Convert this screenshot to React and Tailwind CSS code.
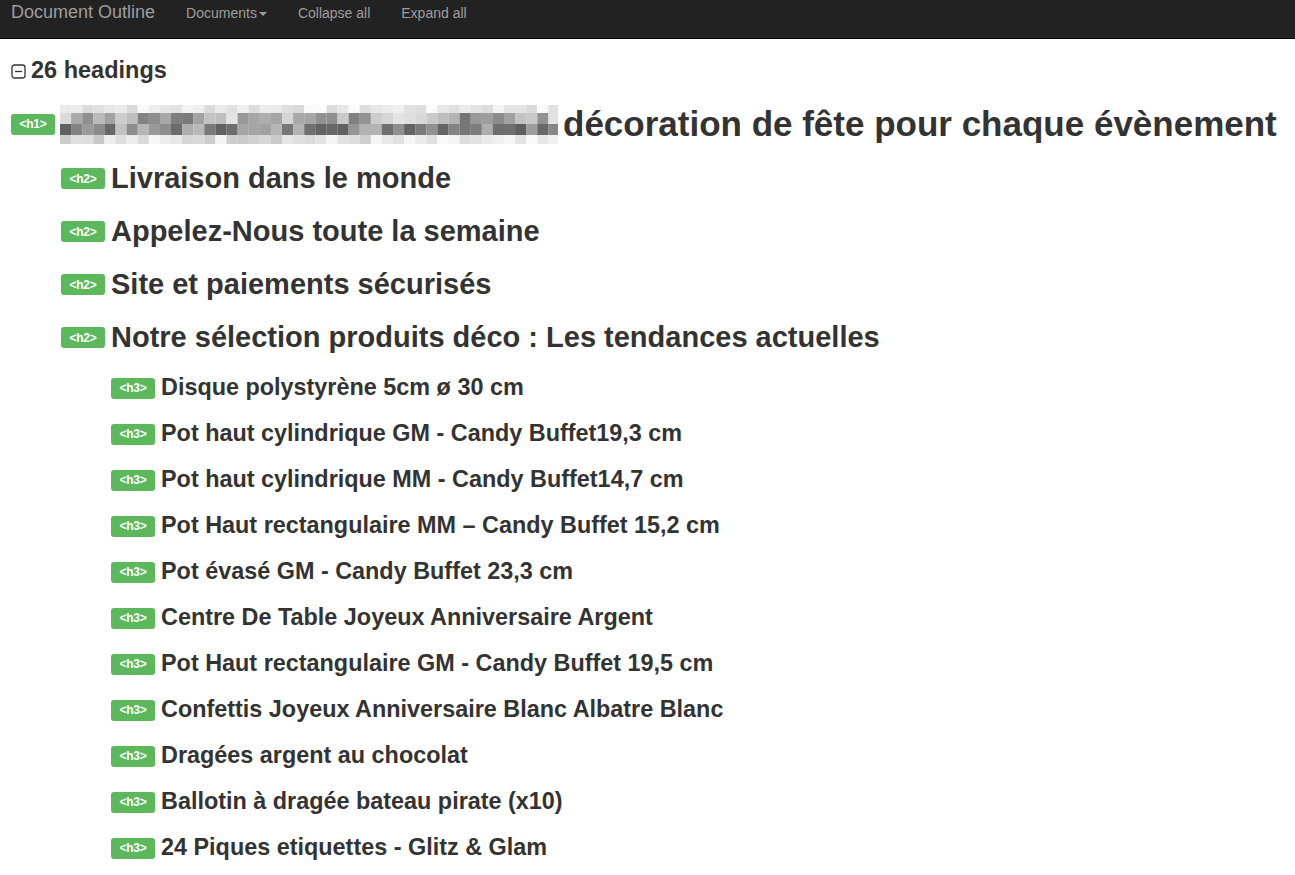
import { useMemo } from "react";

const H2 = [
  "Livraison dans le monde",
  "Appelez-Nous toute la semaine",
  "Site et paiements sécurisés",
  "Notre sélection produits déco : Les tendances actuelles",
];

const H3 = [
  "Disque polystyrène 5cm ø 30 cm",
  "Pot haut cylindrique GM - Candy Buffet19,3 cm",
  "Pot haut cylindrique MM - Candy Buffet14,7 cm",
  "Pot Haut rectangulaire MM – Candy Buffet 15,2 cm",
  "Pot évasé GM - Candy Buffet 23,3 cm",
  "Centre De Table Joyeux Anniversaire Argent",
  "Pot Haut rectangulaire GM - Candy Buffet 19,5 cm",
  "Confettis Joyeux Anniversaire Blanc Albatre Blanc",
  "Dragées argent au chocolat",
  "Ballotin à dragée bateau pirate (x10)",
  "24 Piques etiquettes - Glitz & Glam",
];

function Badge({ tag }) {
  return (
    <span className="inline-flex h-[21px] w-[44px] shrink-0 items-center justify-center rounded-[3px] bg-[#5cb85c] text-[12px] font-bold leading-none tracking-[-0.3px] text-white">
      &lt;{tag}&gt;
    </span>
  );
}

// pixelated (blurred) part of the h1 title
function Mosaic() {
  const cells = useMemo(() => {
    const rows = [
      { y: 0, h: 8, lo: 215, hi: 252 },
      { y: 8, h: 11, lo: 115, hi: 232 },
      { y: 19, h: 11, lo: 95, hi: 195 },
      { y: 30, h: 9, lo: 200, hi: 250 },
    ];
    let seed = 7;
    const rnd = () => {
      seed = (seed * 9301 + 49297) % 233280;
      return seed / 233280;
    };
    const out = [];
    rows.forEach((r, ri) => {
      for (let c = 0; c < 45; c++) {
        const v = Math.round(r.lo + (r.hi - r.lo) * rnd());
        out.push({ x: c * 11.1, y: r.y, h: r.h, v, k: ri + "-" + c });
      }
    });
    return out;
  }, []);
  return (
    <svg width="498" height="39" className="shrink-0">
      {cells.map((c) => (
        <rect key={c.k} x={c.x} y={c.y} width="11.2" height={c.h} fill={`rgb(${c.v},${c.v},${c.v})`} />
      ))}
    </svg>
  );
}

export default function App() {
  return (
    <div className="min-h-screen bg-white text-[#333]" style={{ fontFamily: '"Liberation Sans", Arial, sans-serif' }}>
      <nav className="flex h-[39px] items-start border-b border-black bg-[#222]">
        <span className="ml-[11px] text-[18px] leading-[25px] text-[#9d9d9d]">Document Outline</span>
        <div className="ml-[31px] flex items-center gap-[31px] text-[14px] leading-[26px] text-[#9d9d9d]">
          <span className="flex items-center">
            Documents
            <span className="ml-[2px] mt-[1px] border-x-[4px] border-t-[4px] border-x-transparent border-t-[#9d9d9d]" />
          </span>
          <span>Collapse all</span>
          <span>Expand all</span>
        </div>
      </nav>

      <div className="px-[11px]">
        <div className="mt-[18px] flex h-[28px] items-center gap-[5px]">
          <svg width="15" height="15" viewBox="0 0 15 15" className="shrink-0">
            <rect x="1" y="1" width="13" height="13" rx="2.5" fill="none" stroke="#333" strokeWidth="1.3" />
            <line x1="4" y1="7.5" x2="11" y2="7.5" stroke="#333" strokeWidth="1.3" />
          </svg>
          <span className="text-[23.5px] font-bold">26 headings</span>
        </div>

        <div className="mt-[12px] flex h-[54px] items-center gap-[5px]">
          <Badge tag="h1" />
          <Mosaic />
          <span className="whitespace-nowrap text-[35px] font-bold">décoration de fête pour chaque évènement</span>
        </div>

        <div className="mt-px pl-[50px]">
          {H2.map((t) => (
            <div key={t} className="flex h-[53px] items-center gap-[6px]">
              <Badge tag="h2" />
              <span className="whitespace-nowrap text-[29px] font-bold">{t}</span>
            </div>
          ))}
          <div className="mt-px pl-[50px]">
            {H3.map((t) => (
              <div key={t} className="flex h-[46px] items-center gap-[6px]">
                <Badge tag="h3" />
                <span className="whitespace-nowrap text-[23.4px] font-bold">{t}</span>
              </div>
            ))}
          </div>
        </div>
      </div>
    </div>
  );
}
